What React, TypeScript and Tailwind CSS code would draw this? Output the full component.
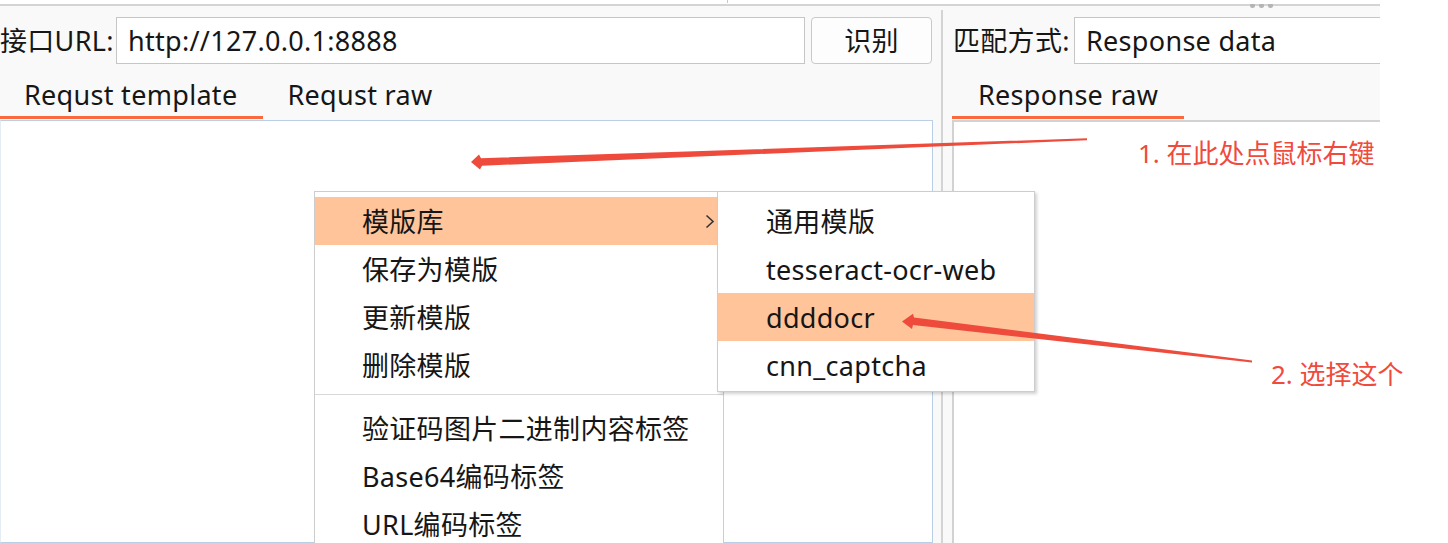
const menuItems = ["模版库", "保存为模版", "更新模版", "删除模版"];
const tagItems = ["验证码图片二进制内容标签", "Base64编码标签", "URL编码标签"];
const templates = ["通用模版", "tesseract-ocr-web", "ddddocr", "cnn_captcha"];

function Tab({ label, active }: { label: string; active?: boolean }) {
  return (
    <div
      className={
        "mt-[8px] flex h-[47px] items-center pl-[24px] pr-[26px] border-b-[3px] " +
        (active ? "border-[#fb6a3f]" : "border-transparent")
      }
    >
      {label}
    </div>
  );
}

function ContextMenu() {
  return (
    <div className="absolute left-[314px] top-[191px] w-[410px] border border-[#cdcdcd] bg-white pt-[5px]">
      {menuItems.map((item, i) => (
        <div
          key={item}
          className={
            "flex h-[48px] items-center justify-between pl-[47px] pr-[8px] " +
            (i === 0 ? "bg-[#ffc49a]" : "")
          }
        >
          <span>{item}</span>
          {i === 0 && (
            <svg width="10" height="15" viewBox="0 0 10 15" className="text-[#333]">
              <path d="M1.5 1.5 L8 7.5 L1.5 13.5" fill="none" stroke="currentColor" strokeWidth="1.6" />
            </svg>
          )}
        </div>
      ))}
      <div className="pb-[9px] pt-[5px]">
        <div className="h-px bg-[#d8d8d8]" />
      </div>
      {tagItems.map((item) => (
        <div key={item} className="flex h-[48px] items-center pl-[47px]">
          {item}
        </div>
      ))}
    </div>
  );
}

function SubMenu() {
  return (
    <div className="absolute left-[717px] top-[191px] w-[318px] border border-[#cdcdcd] bg-white pb-[2px] pt-[5px] shadow-[2px_2px_3px_rgba(0,0,0,0.18)]">
      {templates.map((item) => (
        <div
          key={item}
          className={
            "flex h-[48px] items-center pl-[48px] " +
            (item === "ddddocr" ? "bg-[#ffc49a]" : "")
          }
        >
          {item}
        </div>
      ))}
    </div>
  );
}

function Annotations() {
  return (
    <>
      <svg className="pointer-events-none absolute left-0 top-0" width="1448" height="543">
        <polygon
          points="471,162 479,154.5 481,158.2 1087,138.3 1087,140.2 482,165.8 480,169.5"
          fill="#ee4b3c"
        />
        <polygon
          points="902,321.5 913,313.8 914,317.6 1252,360.6 1252,362.6 913,325 912,329"
          fill="#ee4b3c"
        />
      </svg>
      <div className="absolute left-[1138px] top-[138px] text-[26px] leading-[30px] tracking-normal text-[#f04a3d]">
        1. 在此处点鼠标右键
      </div>
      <div className="absolute left-[1271px] top-[359px] text-[26px] leading-[30px] tracking-normal text-[#f04a3d]">
        2. 选择这个
      </div>
    </>
  );
}

export default function App() {
  return (
    <div className="relative h-[543px] w-[1448px] overflow-hidden bg-white font-['Noto_Sans','Noto_Sans_CJK_SC',sans-serif] text-[27px] leading-none tracking-[0.3px] text-[#161616]">
      <div className="flex h-full w-[1380px] flex-col bg-[#f9f9f9]">
        <div className="relative h-[4px] bg-white">
          <div className="absolute left-[727px] top-0 h-[3px] w-px bg-[#c8c8c8]" />
        </div>
        <div className="flex h-[2px] justify-end bg-[#d4d4d4] pr-[107px]">
          <div className="-mt-[1px] flex gap-[4px]">
            <span className="h-[5px] w-[5px] rounded-full bg-[#b4b4b4]" />
            <span className="h-[5px] w-[5px] rounded-full bg-[#b4b4b4]" />
            <span className="h-[5px] w-[5px] rounded-full bg-[#b4b4b4]" />
          </div>
        </div>

        <div className="flex min-h-0 flex-1">
          {/* left panel */}
          <div className="flex w-[933px] flex-col">
            <div className="mt-[11px] flex h-[47px] items-center">
              <span className="w-[116px] shrink-0">接口URL:</span>
              <div className="flex h-full w-[689px] items-center border border-[#c6c6c6] bg-white pl-[11px]">
                http://127.0.0.1:8888
              </div>
              <button
                type="button"
                className="ml-[6px] flex h-full w-[121px] items-center justify-center rounded-[4px] border border-[#c9c9c9] bg-[#fdfdfd]"
              >
                识别
              </button>
            </div>
            <div className="flex">
              <Tab label="Requst template" active />
              <Tab label="Requst raw" />
            </div>
            <div className="mt-[1px] flex-1 border border-[#b8cfe6] border-l-[#e4ecf4] bg-white" />
          </div>

          <div className="ml-[8px] mt-[4px] w-[2px] bg-[#d4d4d4]" />

          {/* right panel */}
          <div className="flex min-w-0 flex-1 flex-col pl-[9px]">
            <div className="mt-[11px] flex h-[47px] items-center">
              <span className="ml-[1px] w-[121px] shrink-0">匹配方式:</span>
              <div className="flex h-full flex-1 items-center border border-r-0 border-[#c6c6c6] bg-white pl-[11px]">
                Response data
              </div>
            </div>
            <div className="flex">
              <div className="mt-[8px] flex h-[47px] items-center border-b-[3px] border-[#fb6a3f] pl-[26px] pr-[26px]">
                Response raw
              </div>
            </div>
            <div className="mt-[1px] flex-1 border-l-2 border-t-2 border-[#d2d2d2] bg-white" />
          </div>
        </div>
      </div>

      <ContextMenu />
      <SubMenu />
      <Annotations />
    </div>
  );
}
